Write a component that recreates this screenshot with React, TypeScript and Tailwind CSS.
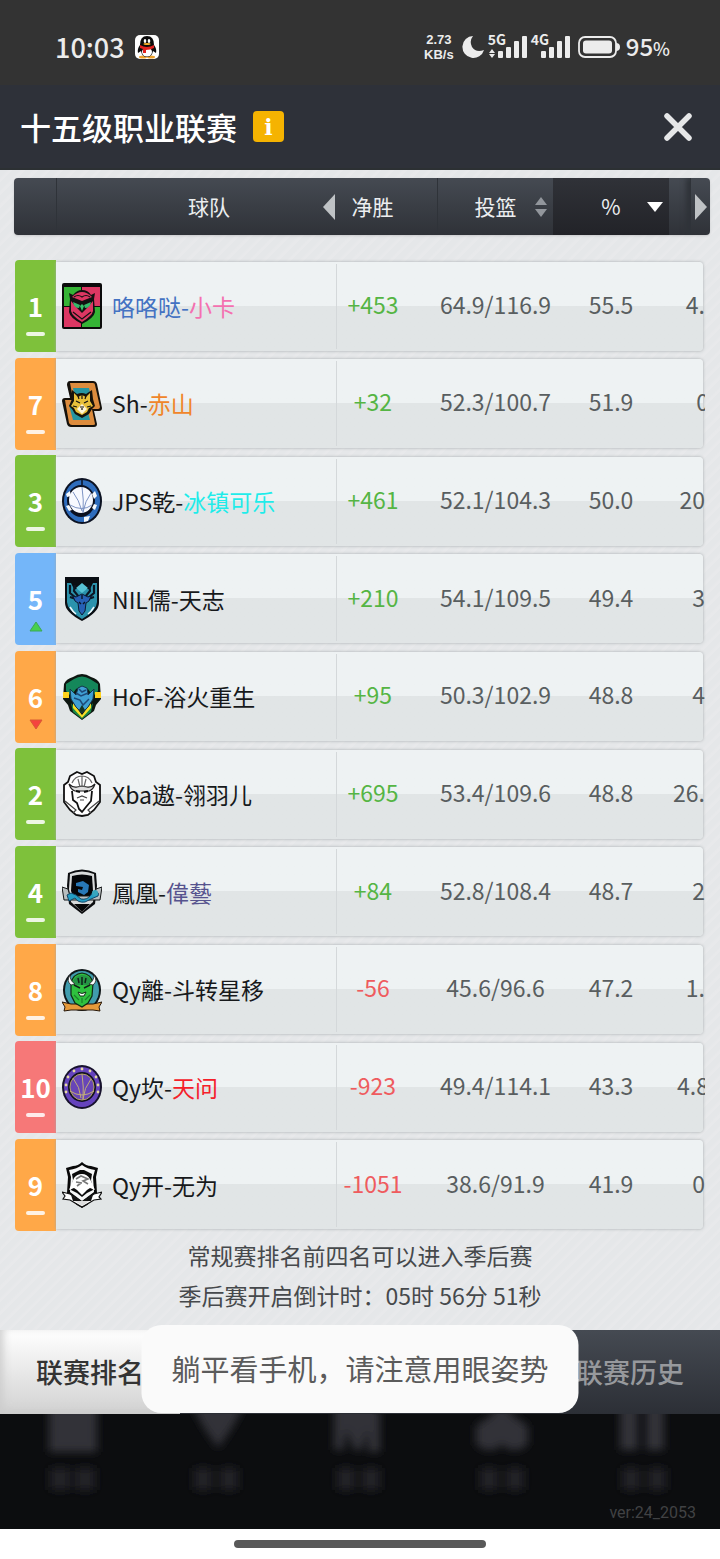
import type { ReactNode } from 'react';
import clsx from 'clsx';

type Trend = 'same' | 'up' | 'down';

interface Team {
    rank: number;
    color: string;
    trend: Trend;
    logo: ReactNode;
    name: string;
    nick: string;
    nameColor?: string;
    nickColor?: string;
    net: string;
    shots: string;
    pct: string;
    next: string;
    cut?: boolean;
}

const GREEN = 'bg-[#7ec13b]';
const ORANGE = 'bg-[#ffa848]';
const BLUE = 'bg-[#74b6f9]';
const RED = 'bg-[#f67878]';

const OwlLogo = () => (
    <svg viewBox="0 0 40 46" className="h-[46px] w-10 shrink-0">
        <rect width="40" height="46" rx="2" fill="#0b0b0b" />
        <path d="M2 4h17v19H2z" fill="#35b335" />
        <path d="M20 4h18v19H20z" fill="#dc3763" />
        <path d="M2 24h17v20H2z" fill="#dc3763" />
        <path d="M20 24h18v20H20z" fill="#35b335" />
        <path d="M7 10l4 2q4-5 9-5 6 0 9 5l4-2-1 6 1 13q-1 6-13 12Q8 35 7 29l1-13z" fill="#111" />
        <path d="M10 14q5-5 10-5t10 5l-5 2-5 2-5-2z" fill="#dc3763" />
        <path d="M9 18l7 8 4 4 4-4 7-8v10q-1 5-11 11Q10 33 9 28z" fill="#dc3763" />
        <path d="M11 19l7 3-1 3q-5 0-6-6zM29 19l-7 3 1 3q5 0 6-6z" fill="#35b96a" />
        <path d="M18 23l2-2 2 2-2 5z" fill="#35c46a" />
        <path d="M12 14q4-3 8 0 4-3 8 0M11 29l9 7 9-7" fill="none" stroke="#111" strokeWidth="1.1" />
    </svg>
);

const TigerLogo = () => (
    <svg viewBox="0 0 40 46" className="h-[46px] w-10 shrink-0">
        <path d="M8 0h23q3 0 4 3l5 24q0 3-3 3h-5l3 13q0 3-3 3H9q-3 0-4-3L0 20q0-3 3-3h5L5 4q0-4 3-4z" fill="#15110b" />
        <path d="M8 2h23q2 0 2 2l5 22q0 2-2 2H13z" fill="#dd8c3d" />
        <path d="M3 19h20l7 9 3 15q0 1-2 1H10q-2 0-3-2z" fill="#dd8c3d" />
        <path d="M11 7h16l4 17H14zM7 24h17l4 15H11z" fill="#2695a1" />
        <path d="M10 9l5 4q5-2 9 0l6-4 1 9 2 7-3 3-3 5-7 4-7-4-3-5-3-3 3-7z" fill="#17130a" />
        <path d="M12 12l4 4 4-2 4 2 4-4v8l3 5-4 2-2 4-5 3-6-3-2-4-3-2 3-5z" fill="#e8c03a" />
        <path d="M15 28l5-5 5 5-5 5z" fill="#fff6d8" />
        <path d="M14 20l4 2M26 20l-4 2M20 14v4M16 15l1 3M24 15l-1 3M11 25l4 1M29 25l-4 1M18 26h4M20 27v2" stroke="#111" strokeWidth="1.2" fill="none" />
    </svg>
);

const BlueBallLogo = () => (
    <svg viewBox="0 0 40 46" className="h-[46px] w-10 shrink-0">
        <ellipse cx="20" cy="23" rx="20" ry="23" fill="#0c1222" />
        <ellipse cx="20" cy="23" rx="18" ry="21" fill="#2f6dbd" />
        <ellipse cx="19" cy="23" rx="14" ry="16" fill="#0b1020" />
        <path d="M20 2v5" stroke="#0b1020" strokeWidth="1.5" />
        <path d="M4 16l4-3 1 5-4 1zM33 13l2 5-3 3-2-5zM4 28l3-1 3 5-3 1zM22 39l6-1-2 5-4 1zM35 27l-2 5-3-2 2-4z" fill="#f5f8fc" />
        <ellipse cx="19" cy="22" rx="12" ry="13" fill="#f7f9ff" />
        <path d="M20 9q2 13 1 26M11 14q6 8 9 19M29 15q-6 8-8 19M8 27q12 7 22 0" fill="none" stroke="#6f88bd" strokeWidth="0.9" />
    </svg>
);

const DeerLogo = () => (
    <svg viewBox="0 0 40 46" className="h-[46px] w-10 shrink-0">
        <path d="M3 1h34v26q0 9-17 18Q3 36 3 27z" fill="#0a0e13" />
        <path d="M5 7h4l3 6h16l3-6h4v19q0 8-15 17Q5 34 5 26z" fill="#2b93ad" />
        <path d="M14 12l6-5 6 5-6 5z" fill="#57c2d5" />
        <path d="M8 9v8l6 5M13 9l-1 6 5 6M32 9v8l-6 5M27 9l1 6-5 6M8 21l6 2M32 21l-6 2" fill="none" stroke="#0b1624" strokeWidth="2.2" />
        <path d="M14 21l6-3 6 3 3-1-2 5-3 2-1 8-3 4-3-4-1-8-3-2-2-5z" fill="#2660b5" stroke="#0b1a31" strokeWidth="1" />
        <path d="M17 26l2 2M23 26l-2 2M20 19v4" stroke="#0b1624" strokeWidth="1.4" />
        <path d="M8 31q3 5 6 7M32 31q-3 5-6 7" stroke="#f4fafb" strokeWidth="1.5" fill="none" />
    </svg>
);

const PhoenixLogo = () => (
    <svg viewBox="0 0 40 46" className="h-[46px] w-10 shrink-0">
        <path d="M11 3q9-6 18 0 7 2 9 7l1 15-5 6-2 6-12 9-12-9-2-6-5-6 1-15q2-5 9-7z" fill="#0e1711" />
        <path d="M12 5q8-5 16 0l8 5v7l-5 5-5-7q-6-5-12 0l-5 7-5-5v-7z" fill="#14875a" />
        <path d="M1 18h6v6H1zM33 18h6v6h-6z" fill="#ffd21c" />
        <path d="M9 29l11 15 11-15-2 9-9 7-9-7z" fill="#198846" />
        <path d="M11 29l9 12 9-12v5l-9 10-9-10z" fill="#f6dd27" />
        <path d="M8 15l6 6 2-7 4-2 5 2 1 7 6-6-1 10-5 8-6 6-6-6-5-8z" fill="#40a0d3" stroke="#15374b" strokeWidth="1" />
        <path d="M14 19l5 3 7-3M12 24l6 2 3 5 6-6M17 15l3 3 4-2" fill="none" stroke="#1d4978" strokeWidth="1.5" />
        <path d="M17 36l3-5 3 5-3 3z" fill="#163525" />
    </svg>
);

const BeardLogo = () => (
    <svg viewBox="0 0 40 46" className="h-[46px] w-10 shrink-0">
        <path d="M15 1l5 2 5-2 7 4 2 6 4 3v17l-6 8-6 5-6 1-6-1-6-5-6-8V14l4-3 2-6z" fill="#fff" stroke="#111" strokeWidth="1.8" />
        <path d="M7 13q4 4 8 3l5-1 5 1q4 1 8-3-2 6-6 7H13q-4-1-6-7z" fill="#ddd" stroke="#222" strokeWidth="1.2" />
        <path d="M10 12q3-7 10-7t10 7M16 8l2 8M24 8l-2 8M20 5v11" fill="none" stroke="#666" strokeWidth="1.2" />
        <path d="M10 20l1 9 4 3 2 6 3 3 4-5 5-6 1-10" fill="none" stroke="#111" strokeWidth="1.8" />
        <path d="M14 20l4 1M26 20l-4 1" stroke="#111" strokeWidth="2" />
        <path d="M15 27l5-2 5 2M18 29h4M3 30l11 9-3 3M37 30l-11 9 3 3" fill="none" stroke="#444" strokeWidth="1.2" />
    </svg>
);

const SerpentLogo = () => (
    <svg viewBox="0 0 40 46" className="h-[46px] w-10 shrink-0">
        <path d="M6 4q14-7 28 0l1 13-2 18-13 10L7 35 5 17z" fill="#0c0d0f" />
        <path d="M8 5q12-5 24 0l1 15-2 13-11 10L9 33 7 20z" fill="#d8dada" />
        <path d="M10 7q10-3 20 0l1 15-4 9H13l-4-9z" fill="#050608" />
        <path d="M0 18l6 2 2 7h24l2-7 6-2-2 13H2z" fill="#b8bebf" stroke="#151617" strokeWidth="1" />
        <path d="M12 35h16l-8 8z" fill="#080808" />
        <path d="M14 14l7-2 6 4-1 7-4 3-6-3v-3l4 1 1-3-7-1z" fill="#2878b7" />
        <path d="M5 26l4-2 5 2 5 4q6 1 9-3l4-5q6 1 4 5l-7 3-6 3q-7 1-10-4l-6 3z" fill="#249ec3" stroke="#144667" strokeWidth="1" />
        <circle cx="33" cy="24" r="3" fill="#38a6bd" />
    </svg>
);

const VikingLogo = () => (
    <svg viewBox="0 0 40 46" className="h-[46px] w-10 shrink-0">
        <ellipse cx="20" cy="23" rx="19" ry="21" fill="#101719" />
        <ellipse cx="20" cy="23" rx="17" ry="19" fill="#409cad" />
        <path d="M0 35l9 2h22l9-2-3 5 1 4-7-1H9l-7 1 1-4z" fill="#e69a3a" stroke="#26170a" strokeWidth="1" />
        <path d="M9 16q2-9 11-10 9 1 11 10l-1 13-4 7-6 4-7-4-4-8z" fill="#2fc13f" stroke="#102914" strokeWidth="1.2" />
        <path d="M10 16q3-8 10-8 8 0 10 8l-5 2H15z" fill="#259445" />
        <path d="M8 8q0 6 5 9l-4 1q-5-4-1-10zM32 8q0 6-5 9l4 1q5-4 1-10z" fill="#fff" stroke="#222" strokeWidth="0.8" />
        <path d="M12 18l6 3M28 18l-6 3M20 10v8M16 11l1 5M24 11l-1 5" stroke="#112018" strokeWidth="1.5" />
        <path d="M16 25q4 3 8 0l-2 4h-4z" fill="#fff" stroke="#153319" strokeWidth="1" />
        <path d="M12 28l5 5M28 28l-5 5M20 31v5" stroke="#198229" strokeWidth="1.2" />
    </svg>
);

const PurpleBallLogo = () => (
    <svg viewBox="0 0 40 46" className="h-[46px] w-10 shrink-0">
        <ellipse cx="20" cy="23" rx="20" ry="22" fill="#17122d" />
        <ellipse cx="20" cy="23" rx="18" ry="20" fill="#6543bd" />
        <ellipse cx="20" cy="23" rx="14" ry="15" fill="#11121e" />
        <ellipse cx="20" cy="23" rx="12" ry="13" fill="#6845b7" stroke="#b5a167" strokeWidth="1" />
        <path d="M20 10q2 13 1 26M11 14q7 9 8 20M29 15q-7 9-8 20M8 27q12 8 24 0" fill="none" stroke="#c1ae78" strokeWidth="1" />
        <g fill="#e6d9a0">
            <circle cx="20" cy="5" r="1.4" /><circle cx="12" cy="7" r="1.4" /><circle cx="28" cy="7" r="1.4" />
            <circle cx="6" cy="13" r="1.4" /><circle cx="34" cy="13" r="1.4" /><circle cx="4" cy="21" r="1.4" />
            <circle cx="36" cy="21" r="1.4" /><circle cx="4" cy="28" r="1.4" /><circle cx="36" cy="28" r="1.4" />
        </g>
    </svg>
);

const KnightLogo = () => (
    <svg viewBox="0 0 40 46" className="h-[46px] w-10 shrink-0">
        <path d="M4 6l7-2q5 0 9-4 4 4 9 4l7 2-2 9 1 16q-3 9-15 15Q8 40 5 31l1-16z" fill="#090909" />
        <path d="M7 8q8-1 13-5 5 4 13 5l-2 7 1 15-12 9-12-9 1-15z" fill="#f6f7f7" />
        <path d="M10 12l8-4h4l8 4-1 6 2 10-6 3-5 4-5-4-6-3 2-10z" fill="#0b0b0b" />
        <path d="M7 28l5-12q3-4 8-4t8 5l5 11-5-2-3 2-5 5-5-5-3-2z" fill="#fff" />
        <path d="M14 17l5-3 7 3-5 2 5 3M14 20l6 1M15 24l4-3" fill="none" stroke="#777" strokeWidth="1.6" />
        <path d="M0 30l8 2 12 8 12-8 8-2-3 5 2 2-7 1-12 7-12-7-7-1 2-3z" fill="#fff" stroke="#111" strokeWidth="1.2" />
        <path d="M9 33l11 7 11-7-2 6H11z" fill="#111" />
        <path d="M13 39h14l-7 5z" fill="#ddd" />
    </svg>
);

const teams: Team[] = [
    { rank: 1, color: GREEN, trend: 'same', logo: <OwlLogo />, name: '咯咯哒-', nick: '小卡', nameColor: 'text-[#4472c2]', nickColor: 'text-[#f470b0]', net: '+453', shots: '64.9/116.9', pct: '55.5', next: '4.' },
    { rank: 7, color: ORANGE, trend: 'same', logo: <TigerLogo />, name: 'Sh-', nick: '赤山', nickColor: 'text-[#f0852a]', net: '+32', shots: '52.3/100.7', pct: '51.9', next: '0', cut: true },
    { rank: 3, color: GREEN, trend: 'same', logo: <BlueBallLogo />, name: 'JPS乾-', nick: '冰镇可乐', nickColor: 'text-[#1fecea]', net: '+461', shots: '52.1/104.3', pct: '50.0', next: '20' },
    { rank: 5, color: BLUE, trend: 'up', logo: <DeerLogo />, name: 'NIL儒-', nick: '天志', net: '+210', shots: '54.1/109.5', pct: '49.4', next: '3' },
    { rank: 6, color: ORANGE, trend: 'down', logo: <PhoenixLogo />, name: 'HoF-', nick: '浴火重生', net: '+95', shots: '50.3/102.9', pct: '48.8', next: '4' },
    { rank: 2, color: GREEN, trend: 'same', logo: <BeardLogo />, name: 'Xba遨-', nick: '翎羽儿', net: '+695', shots: '53.4/109.6', pct: '48.8', next: '26.' },
    { rank: 4, color: GREEN, trend: 'same', logo: <SerpentLogo />, name: '鳳凰-', nick: '偉藝', nickColor: 'text-[#56538e]', net: '+84', shots: '52.8/108.4', pct: '48.7', next: '2' },
    { rank: 8, color: ORANGE, trend: 'same', logo: <VikingLogo />, name: 'Qy離-', nick: '斗转星移', net: '-56', shots: '45.6/96.6', pct: '47.2', next: '1.' },
    { rank: 10, color: RED, trend: 'same', logo: <PurpleBallLogo />, name: 'Qy坎-', nick: '天问', nickColor: 'text-[#f5202a]', net: '-923', shots: '49.4/114.1', pct: '43.3', next: '4.8', cut: true },
    { rank: 9, color: ORANGE, trend: 'same', logo: <KnightLogo />, name: 'Qy开-', nick: '无为', net: '-1051', shots: '38.6/91.9', pct: '41.9', next: '0' },
];

const TrendMark = ({ trend }: { trend: Trend }) => {
    if (trend === 'same') return <span className="h-1 w-[19px] rounded-xs bg-white/85" />;
    return (
        <svg viewBox="0 0 14 11" className={clsx('h-[11px] w-3.5', trend === 'down' && 'rotate-180')}>
            <path d="M7 1l6 9H1z" fill={trend === 'up' ? '#48d04e' : '#f5433f'} stroke={trend === 'up' ? '#3ba75a' : '#d95a32'} />
        </svg>
    );
};

const Signal = ({ label, arrows }: { label: string; arrows?: boolean }) => (
    <div className="relative h-6 w-[39px]">
        <span className="absolute -top-1 left-0 text-[14px] leading-4 font-bold">{label}</span>
        <svg viewBox="0 0 39 24" className="h-6 w-[39px]" fill="#ececec">
            {arrows && <path d="M1 18l3-4 3 4zM1 19h6l-3 4z" />}
            <rect x="10" y="16" width="5" height="7" rx="1" />
            <rect x="18" y="12" width="5" height="11" rx="1" />
            <rect x="26" y="6" width="5" height="17" rx="1" />
            <rect x="34" y="1" width="5" height="22" rx="1" />
        </svg>
    </div>
);

const StatusBar = () => (
    <div className="flex h-[85px] items-center justify-between bg-[#333333] pt-2 pr-[50px] pl-[55px] text-[#ececec]">
        <div className="flex items-center gap-2.5">
            <span className="text-[27px] leading-8 font-medium">10:03</span>
            <svg viewBox="0 0 24 24" className="h-6 w-6">
                <rect width="24" height="24" rx="5" fill="#fff" />
                <ellipse cx="8" cy="22" rx="4" ry="1.5" fill="#eda12c" />
                <ellipse cx="16" cy="22" rx="4" ry="1.5" fill="#eda12c" />
                <path d="M12 1q7 0 7 9 3 4 2 8l-3-2q-1 6-6 6t-6-6l-3 2q-1-4 2-8 0-9 7-9z" fill="#0b0b0b" />
                <ellipse cx="12" cy="17" rx="5" ry="4.5" fill="#fff" />
                <ellipse cx="10" cy="6" rx="1.3" ry="2" fill="#fff" />
                <ellipse cx="14" cy="6" rx="1.3" ry="2" fill="#fff" />
                <ellipse cx="12" cy="9" rx="3.5" ry="1" fill="#f4ad27" />
                <path d="M5 10q7 4 14 0v3q-4 2-8 2v3H8v-4l-3-1z" fill="#e2221f" />
            </svg>
        </div>
        <div className="flex items-center">
            <div className="mr-[7px] text-center font-['Liberation_Sans',sans-serif] text-[13px] leading-[15px] font-bold">
                <div>2.73</div>
                <div>KB/s</div>
            </div>
            <svg viewBox="0 0 23 24" className="mr-1 h-6 w-[23px]">
                <path d="M12 1A11 11 0 1 0 23 15Q15 18 11 12 8 6 12 1z" fill="#ececec" />
            </svg>
            <div className="flex gap-1">
                <Signal label="5G" arrows />
                <Signal label="4G" />
            </div>
            <svg viewBox="0 0 42 22" className="mr-1.5 ml-2 h-[22px] w-[42px]">
                <rect x="1" y="1" width="37" height="20" rx="6" fill="none" stroke="#ececec" strokeWidth="1.8" />
                <rect x="5" y="4.500" width="29" height="13" rx="3" fill="#ececec" />
                <path d="M38 7q4 0 4 4t-4 4z" fill="#ececec" />
            </svg>
            <span className="text-[24px] leading-8 font-medium">95<span className="text-[18px]">%</span></span>
        </div>
    </div>
);

const TitleBar = () => (
    <header className="flex h-[85px] items-center justify-between border-b-2 border-[#2c3033] bg-[#2e3139] pr-6 pl-5">
        <div className="flex items-center gap-4 text-white">
            <h1 className="text-[31px] leading-10 font-medium">十五级职业联赛</h1>
            <button className="flex h-[31px] w-[31px] items-center justify-center rounded-sm bg-[#f5b301] font-['DejaVu_Serif',serif] text-[22px] leading-none font-bold">i</button>
        </div>
        <button aria-label="✕">
            <svg viewBox="0 0 36 36" className="h-9 w-9">
                <path d="M7 7l22 22M29 7L7 29" stroke="#e6e7e8" strokeWidth="5.500" strokeLinecap="round" />
            </svg>
        </button>
    </header>
);

const TableHead = () => (
    <thead className="block">
        <tr className="flex h-[57px] overflow-hidden rounded-sm bg-linear-to-b from-[#454a52] to-[#2f3238] text-[21px] text-[#eceef0] shadow-sm">
            <td className="w-[43px] border-r border-[#2f3339]" />
            <th className="relative flex w-[280px] items-center justify-center pl-6 font-normal">
                球队
                <svg viewBox="0 0 12 26" className="absolute right-0.5 h-[26px] w-3">
                    <path d="M12 0v26L0 13z" fill="#bfc2c5" />
                </svg>
            </th>
            <th className="w-[101px] border-r border-[#2f3339] pr-[29px] font-normal">
                <button className="h-full w-full">净胜</button>
            </th>
            <th className="w-[115px] font-normal">
                <button className="relative flex h-full w-full items-center justify-center">
                    投篮
                    <svg viewBox="0 0 12 20" className="absolute right-1.5 h-5 w-3" fill="#92969c">
                        <path d="M6 0l6 8H0zM0 12h12l-6 8z" />
                    </svg>
                </button>
            </th>
            <th className="w-[116px] bg-linear-to-b from-[#303238] to-[#222328] font-normal">
                <button className="relative flex h-full w-full items-center justify-center">
                    %
                    <svg viewBox="0 0 16 10" className="absolute right-1.5 h-2.5 w-4" fill="#fff">
                        <path d="M0 0h16l-8 10z" />
                    </svg>
                </button>
            </th>
            <td className="ml-auto flex w-5 items-center border-l border-[#2f3339] pl-1 shadow-[-4px_0_5px_#2f3339]">
                <svg viewBox="0 0 12 26" className="h-[26px] w-3">
                    <path d="M0 0v26l12-13z" fill="#bfc2c5" />
                </svg>
            </td>
        </tr>
    </thead>
);

const TeamRow = ({ team }: { team: Team }) => (
    <tr className="flex h-[92px] items-center text-[23px] text-[#595e60]">
        <td className={clsx('flex h-full w-[41px] flex-col items-center rounded-l-sm pt-[30px]', team.color)}>
            <span className="h-8 text-[26px] leading-8 font-bold text-white">{team.rank}</span>
            <span className="flex h-4 items-center pt-2"><TrendMark trend={team.trend} /></span>
        </td>
        <td className="flex h-[89px] flex-1 items-center rounded-r-sm bg-linear-to-b from-[#eef2f3] from-50% to-[#e1e5e6] to-50% shadow-[0_0_3px_#a3a8aa]">
            <div className="flex h-[85px] w-[281px] items-center gap-2.5 border-r border-[#d4d8da] pl-1.5">
                {team.logo}
                <span className={clsx('whitespace-nowrap', team.nameColor ?? 'text-[#17191b]')}>
                    {team.name}<span className={team.nickColor}>{team.nick}</span>
                </span>
            </div>
            <div className="-mr-0.5 flex flex-1 pb-1">
                <div className={clsx('w-[72px] text-center', team.net.startsWith('+') ? 'text-[#55b544]' : 'text-[#ef5b5e]')}>{team.net}</div>
                <div className="ml-[29px] w-[115px] text-center">{team.shots}</div>
                <div className="w-[116px] text-center">{team.pct}</div>
                <div className="flex flex-1 justify-end overflow-hidden">
                    <span className={clsx(team.cut && '-mr-1')}>{team.next}</span>
                </div>
            </div>
        </td>
    </tr>
);

// Main menu icons, dimmed and out of focus behind the league panel
const DimmedMenu = () => (
    <svg viewBox="0 0 720 115" className="absolute inset-x-0 top-0 w-full">
        <defs>
            <filter id="soft" x="-20%" y="-20%" width="140%" height="140%"><feGaussianBlur stdDeviation="4" /></filter>
            <filter id="softer" x="-20%" y="-40%" width="140%" height="180%"><feGaussianBlur stdDeviation="5" /></filter>
        </defs>
        <g filter="url(#soft)" fill="#303238">
            <path d="M49-8h48v46H49zM192-8h52l-12 22-14 20-14-20zM334-6l16-4h18l12 8v40h-12V16l-6 20h-8l-8-20-2 20h-10zM476 12l14-10 12-12 12 12 14 10v18q-10 10-22 4l-4-4-4 4q-12 6-22-4zM620-8h18v44h-18zM646-8h18v44h-18z" />
        </g>
        <g filter="url(#softer)" fill="#212327">
            <path d="M50 54h20v22H50zM75 54h20v22H75zM194 54h18v22h-18zM220 54h18v22h-18zM337 54h18v22h-18zM362 54h18v22h-18zM480 54h18v22h-18zM506 54h18v22h-18zM622 54h18v22h-18zM648 54h18v22h-18z" />
        </g>
    </svg>
);

export default function App() {
    return (
        <div className="min-h-screen bg-white font-['Noto_Sans_CJK_SC',sans-serif]">
            <StatusBar />
            <TitleBar />

            <main className="bg-[repeating-linear-gradient(135deg,#e5e7e9_0px,#e5e7e9_5px,#e8e9eb_7px,#e8e9eb_9px)] pt-2 pb-[15px]">
                <div className="pr-2.5 pl-3.5">
                    <table className="block w-full">
                        <TableHead />
                        <tbody className="mt-[25px] flex min-h-[971px] flex-col justify-between pr-[7px] pl-px">
                            {teams.map((team) => (
                                <TeamRow key={team.rank} team={team} />
                            ))}
                        </tbody>
                    </table>
                </div>
                <div className="mt-1 text-center text-[23px] leading-10 text-[#46494c]">
                    <p>常规赛排名前四名可以进入季后赛</p>
                    <p>季后赛开启倒计时：05时 56分 51秒</p>
                </div>
            </main>

            <nav className="relative flex h-[84px] justify-between bg-linear-to-b from-[#454a52] to-[#2c2f36] text-[27px] font-medium">
                <button className="w-1/4 bg-linear-to-b from-white to-[#d2d2d2] text-[#333333] shadow-[inset_3px_-3px_8px_#cccccc]">联赛排名</button>
                <button className="w-1/4 text-[#97999d]">联赛历史</button>
                <div role="status" className="absolute -top-[5px] left-1/2 flex h-[88px] -translate-x-1/2 items-center rounded-[20px] bg-[#fafafa] px-[30px] text-[29px] font-normal whitespace-nowrap text-[#5b5b5b]">
                    躺平看手机，请注意用眼姿势
                </div>
            </nav>

            <footer className="relative flex h-[115px] items-end justify-end overflow-hidden bg-[#0c0d0f] pr-6 pb-1">
                <DimmedMenu />
                <span className="font-[Roboto,sans-serif] text-[16px] leading-6 text-[#414244]">ver:24_2053</span>
            </footer>

            <div className="flex h-[30px] items-center justify-center bg-white">
                <div className="h-2 w-[252px] rounded-full bg-[#595959]" />
            </div>
        </div>
    );
}
